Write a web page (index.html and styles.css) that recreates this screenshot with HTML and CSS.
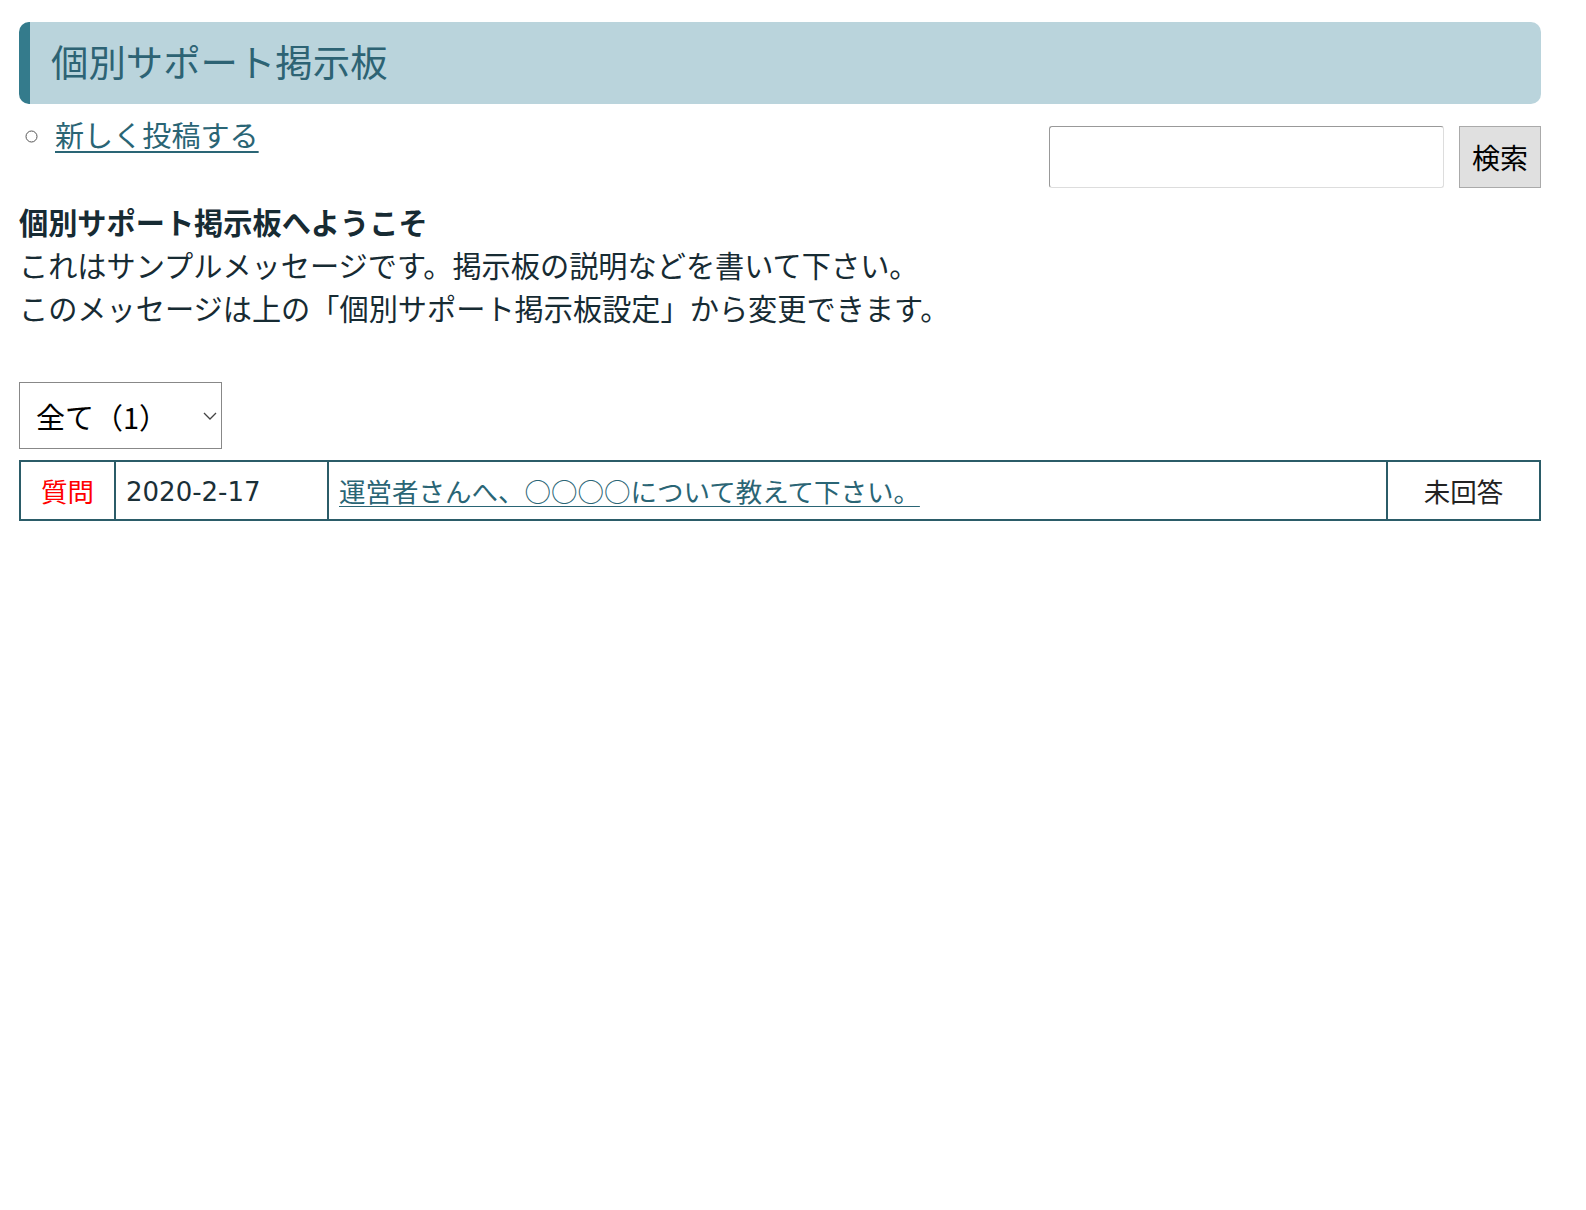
FILE: index.html
```html
<!DOCTYPE html>
<html lang="ja">
<head>
<meta charset="utf-8">
<title>個別サポート掲示板</title>
<link rel="stylesheet" href="styles.css">
</head>
<body>
<div class="page">
  <h1 class="board-title">個別サポート掲示板</h1>
  <div class="top-row">
    <ul class="actions">
      <li><a href="#" class="post-link">新しく投稿する</a></li>
    </ul>
    <form class="search">
      <input type="text" class="search-input">
      <button type="button" class="search-btn">検索</button>
    </form>
  </div>
  <div class="welcome">
    <div class="welcome-title">個別サポート掲示板へようこそ</div>
    <div>これはサンプルメッセージです。掲示板の説明などを書いて下さい。</div>
    <div>このメッセージは上の「個別サポート掲示板設定」から変更できます。</div>
  </div>
  <div class="filter">
    <select class="filter-select">
      <option>全て（1）</option>
    </select>
    <svg class="chev" width="14" height="8" viewBox="0 0 14 8"><path d="M1 1 L7 7 L13 1" fill="none" stroke="#444" stroke-width="1.3"/></svg>
  </div>
  <table class="posts">
    <tr>
      <td class="c-type">質問</td>
      <td class="c-date">2020-2-17</td>
      <td class="c-title"><a href="#">運営者さんへ、○○○○について教えて下さい。 </a></td>
      <td class="c-status">未回答</td>
    </tr>
  </table>
</div>
</body>
</html>
```
FILE: styles.css
```css
html, body {
  margin: 0;
  padding: 0;
  background: #fff;
}
body {
  font-family: "Noto Sans CJK JP", "Noto Sans", sans-serif;
  color: #1a2f37;
}
.page {
  padding: 22px 45px 40px 19px;
}
.board-title {
  margin: 0;
  height: 82px;
  box-sizing: border-box;
  background: #bad4dc;
  border-left: 11px solid #347b8c;
  border-radius: 10px;
  padding-left: 21px;
  font-size: 37.4px;
  font-weight: normal;
  color: #2d6374;
  line-height: 78px;
}
.top-row {
  display: flex;
  justify-content: space-between;
  align-items: flex-start;
  margin-top: 9px;
}
.actions {
  margin: 0;
  padding-left: 36px;
  list-style: circle;
  font-size: 29.1px;
  line-height: 43px;
  color: #555;
}
.post-link {
  color: #2a6575;
  text-decoration: underline;
  text-underline-offset: 4px;
  text-decoration-thickness: 2px;
}
.search {
  display: flex;
  gap: 15px;
  margin-top: 13px;
}
.search-input {
  width: 395px;
  height: 62px;
  box-sizing: border-box;
  border: 1px solid #999;
  border-bottom-color: #ddd;
  border-right-color: #ddd;
  border-radius: 3px;
  margin: 0;
}
.search-btn {
  width: 82px;
  height: 62px;
  box-sizing: border-box;
  background: #e0e0e0;
  border: 1px solid #aaa;
  border-radius: 0;
  font-family: "Noto Sans CJK JP", sans-serif;
  font-size: 28px;
  color: #000;
  padding: 0;
  margin: 0;
}
.welcome {
  margin-top: 12px;
  font-size: 29.2px;
  line-height: 43px;
  color: #172b33;
}
.welcome-title {
  font-weight: bold;
}
.filter {
  position: relative;
  margin-top: 53px;
  width: 203px;
}
.filter-select {
  appearance: none;
  -webkit-appearance: none;
  width: 203px;
  height: 67px;
  box-sizing: border-box;
  border: 1px solid #888;
  border-radius: 0;
  background: #fff;
  padding-left: 16px;
  font-family: "Noto Sans CJK JP", sans-serif;
  font-size: 29px;
  color: #000;
  display: block;
}
.chev {
  position: absolute;
  left: 184px;
  top: 30px;
  pointer-events: none;
}
.posts {
  margin-top: 11px;
  width: 100%;
  border-collapse: collapse;
  border: 2px solid #2b5c68;
  font-size: 26.5px;
}
.posts td {
  border: 2px solid #2b5c68;
  height: 57px;
  padding: 0 10px;
  line-height: 36px;
}
.c-type {
  width: 73px;
  text-align: center;
  color: #f00;
}
.posts td.c-date {
  width: 191px;
  height: 54px;
  color: #1a2f37;
  font-family: "DejaVu Sans", "Noto Sans CJK JP", sans-serif;
  font-size: 26px;
  padding-top: 3px;
}
.c-title a {
  color: #2a6575;
  text-decoration: underline;
  text-decoration-thickness: 1px;
  text-underline-offset: 4px;
}
.c-status {
  width: 131px;
  text-align: center;
  color: #222;
}
```
